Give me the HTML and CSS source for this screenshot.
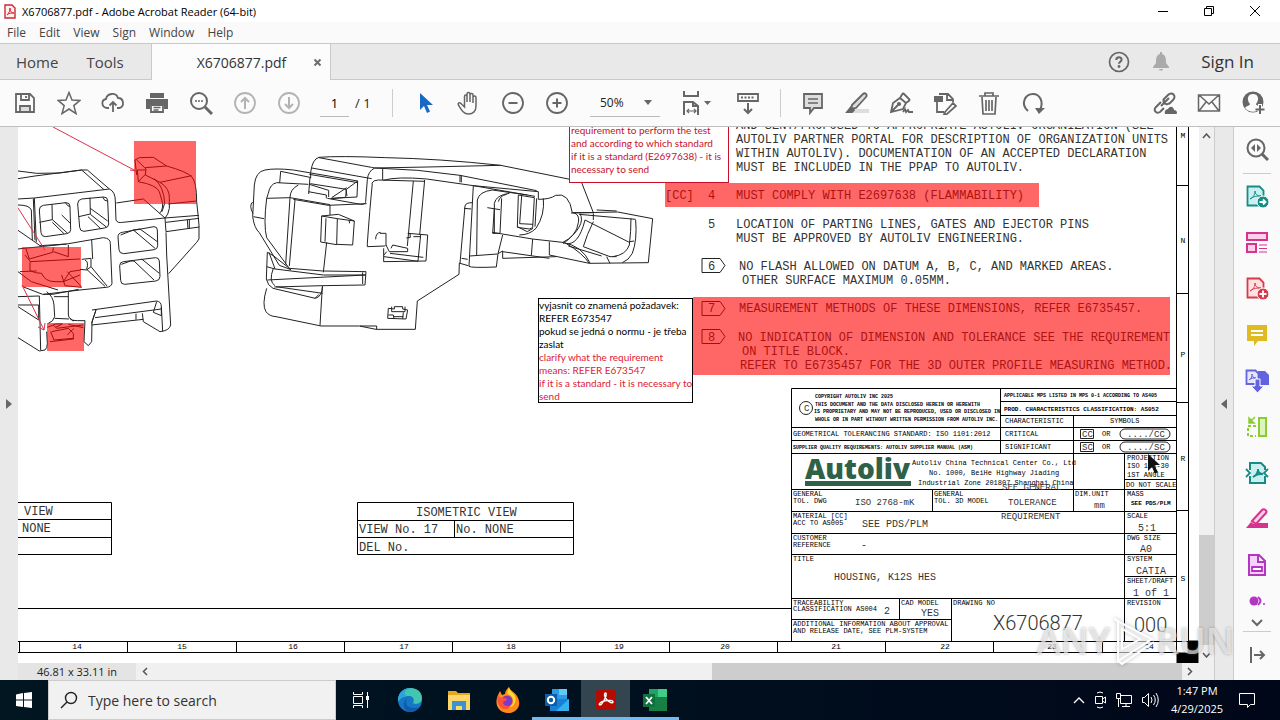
FILE: index.html
```html
<!DOCTYPE html>
<html lang="en">
<head>
<meta charset="utf-8">
<title>X6706877.pdf - Adobe Acrobat Reader (64-bit)</title>
<link rel="stylesheet" href="styles.css">
</head>
<body>
<header class="titlebar">
  <svg class="app-icon" width="12" height="15" viewBox="0 0 12 15"><path d="M1 1h7l3 3v10H1z" fill="#fff0f0" stroke="#c92a35" stroke-width="1.4"/><path d="M3 11c2-2 3-4 3-7 0 3 1 5 4 5-3 0-5 0-7 2z" fill="none" stroke="#d12631"/></svg>
  <span class="window-title">X6706877.pdf - Adobe Acrobat Reader (64-bit)</span>
  <div class="window-buttons">
    <button aria-label="Minimize"><svg width="12" height="12"><path d="M1 6.500h10" stroke="#000"/></svg></button>
    <button aria-label="Restore"><svg width="12" height="12" fill="none" stroke="#000"><path d="M1.500 3.500h7v7h-7zM3.500 3.500v-2h7v7h-2"/></svg></button>
    <button aria-label="Close"><svg width="12" height="12"><path d="M1 1l10 10M11 1L1 11" stroke="#000"/></svg></button>
  </div>
</header>
<nav class="menubar"><button>File</button><button>Edit</button><button>View</button><button>Sign</button><button>Window</button><button>Help</button></nav>
<div class="tabbar">
  <button class="nav-tab">Home</button><button class="nav-tab">Tools</button>
  <div class="file-tab"><span>X6706877.pdf</span><button aria-label="Close tab"><svg width="9" height="9"><path d="M1.500 1.500l6 6M7.500 1.500l-6 6" stroke="#6e6e6e" stroke-width="2"/></svg></button></div>
  <div class="account">
    <button aria-label="Help"><svg width="22" height="22" viewBox="0 0 22 22" fill="none" stroke="#666" stroke-width="1.700"><circle cx="11" cy="11" r="9.500"/><path d="M8.300 9c0-3.500 5.300-3.500 5.300-.3 0 2-2.600 2-2.600 4" stroke-width="2"/><circle cx="11" cy="15.500" r=".6"/></svg></button>
    <button aria-label="Notifications"><svg width="20" height="22" viewBox="0 0 20 22" fill="#aaa"><path d="M9 1h2v2c4 1 4 5 4 9l3 4v1H2v-1l3-4c0-4 0-8 4-9zM8 18h4c0 2-4 2-4 0z"/></svg></button>
    <button class="signin">Sign In</button>
  </div>
</div>
<div class="toolbar">
  <button aria-label="Save"><svg class="ic" viewBox="0 0 24 24"><path d="M3 3h14l4 4v14H3zM8 3v6h8V3M13 5v2"/><path d="M7 21v-6h10v6z" fill="#ddd"/></svg></button>
  <button aria-label="Star"><svg class="ic" viewBox="0 0 24 24"><path d="M12 1.500l3 7.500 8 .4-6.200 5.200 2.200 8L12 18l-7 4.600 2.200-8L1 9.400 9 9z" stroke-width="1.500"/></svg></button>
  <button aria-label="Upload"><svg class="ic" viewBox="0 0 24 24"><path d="M8 17H6c-6-1-6-8-1-9C6 2 15 1 17 7c6 0 7 9 1 10h-2M12 21V11M8.500 14.500L12 11l3.500 3.500"/></svg></button>
  <button aria-label="Print"><svg class="ic" viewBox="0 0 24 24"><path d="M5 2h14v5H5zM1 8h22v10h-4v-4H5v4H1z" fill="#666" stroke="none"/><path d="M6 14h12v7H6z" fill="#fbfbfb"/><path d="M8.500 16.500h7M8.500 19h5" stroke-width="1.300"/></svg></button>
  <button aria-label="Search"><svg class="ic" viewBox="0 0 24 24"><circle cx="10" cy="10" r="8" stroke-width="2"/><path d="M16 16l7 7" stroke-width="3"/><path d="M6 10h2M9 10h2M12 10h2" stroke-width="1.600"/></svg></button>
  <button aria-label="Previous page"><svg class="ic dim" viewBox="0 0 24 24"><circle cx="12" cy="12" r="10"/><path d="M12 18V7M8 11l4-4 4 4" stroke-width="2"/></svg></button>
  <button aria-label="Next page"><svg class="ic dim" viewBox="0 0 24 24"><circle cx="12" cy="12" r="10"/><path d="M12 6v11M8 13l4 4 4-4" stroke-width="2"/></svg></button>
  <input class="page-box" aria-label="Page" value="1"><span class="page-total">/ 1</span>
  <span class="divider"></span>
  <button aria-label="Select"><svg class="ic" viewBox="0 0 24 24"><path d="M7 2v17l4-4 3 7 3-1.500L14 14h6z" fill="#1769c5" stroke="none"/></svg></button>
  <button aria-label="Hand"><svg class="ic" viewBox="0 0 24 24"><path d="M7.500 14V5.500c0-2 2.500-2 2.500 0V11 3c0-2 3-2 3 0v8-7c0-2 3-2 3 0v8-5.500c0-2 3-2 3 0V15c0 5-3 8-7.500 8-5 0-7-4-10-9-1-2 1-3 2.500-1.500L7.500 16z" stroke-width="1.500"/></svg></button>
  <button aria-label="Zoom out"><svg class="ic" viewBox="0 0 24 24"><circle cx="12" cy="12" r="10"/><path d="M7.500 12h9" stroke-width="2"/></svg></button>
  <button aria-label="Zoom in"><svg class="ic" viewBox="0 0 24 24"><circle cx="12" cy="12" r="10"/><path d="M7.500 12h9M12 7.500v9" stroke-width="2"/></svg></button>
  <button class="zoom-box">50%<svg width="8" height="5"><path d="M0 0h8L4 5z" fill="#666"/></svg></button>
  <button class="fit" aria-label="Fit width"><svg width="32" height="26" viewBox="0 0 32 26" fill="none" stroke="#666" stroke-width="2"><path d="M4 1v5h14V1M4 25V12h9l5 4v9M13 12v4h5"/><path d="M7 21h9M9 19l-2 2 2 2M14 19l2 2-2 2" stroke-width="1.200"/><path d="M24 11h7l-3.500 4z" fill="#666" stroke="none"/></svg></button>
  <button aria-label="Keyboard"><svg class="ic" viewBox="0 0 24 24"><path d="M2 3h20v7H2z"/><path d="M5 6.500h14" stroke-dasharray="2 1.500"/><path d="M12 12v10M8 18l4 4 4-4" stroke-width="2"/></svg></button>
  <span class="divider"></span>
  <button aria-label="Comment"><svg class="ic" viewBox="0 0 24 24"><path d="M3 3h18v14h-8l-4 5v-5H3z" fill="#ddd"/><path d="M7 8h10M7 12h10" stroke-width="1.300"/></svg></button>
  <button aria-label="Highlight"><svg class="ic" viewBox="0 0 24 24"><path d="M12 18h12v4H5z" fill="#ddd" stroke="none"/><path d="M7 14L18 3c2-2 5 1 3 3L11 17l-5 1z" fill="#ddd"/><path d="M2 21l4-5 3 3-2 2z" fill="#666"/></svg></button>
  <button aria-label="Fill and sign"><svg class="ic" viewBox="0 0 24 24"><path d="M2 21l2-9 7-5 6 5-3 6zM2 21l7-7M11 7l3-5M17 12l4-3M14 2l7 7"/><circle cx="10" cy="13" r="1.200" fill="#666"/><path d="M14 21l2-3 1 3 2-2 1 2h4"/></svg></button>
  <button aria-label="Organize"><svg class="ic" viewBox="0 0 24 24"><path d="M4 11v10h7M6 3h9l5 5v3M14 3v6h6M12 21l8-9 3 3-9 8-3 .5z"/><path d="M1 5h9v6H1z" fill="#666" stroke="none"/></svg></button>
  <button aria-label="Delete"><svg class="ic" viewBox="0 0 24 24"><path d="M2 5h20M8 5V2h8v3M5 6l1 17h12l1-17M9 9v11M12 9v11M15 9v11" stroke-width="1.700"/></svg></button>
  <button aria-label="Rotate"><svg class="ic" viewBox="0 0 24 24"><path d="M7 20C-1 13 4 3 12 3c7 0 11 8 7 16" stroke-width="2"/><path d="M14 17h10l-6 6z" fill="#666" stroke="none"/></svg></button>
  <span class="spacer"></span>
  <button aria-label="Share link"><svg class="ic" viewBox="0 0 24 24"><path d="M8 15l8-8M10 9l5-5c4-4 9 1 5 5l-4 4M8 11l-5 5c-4 4 2 8 5 4l3-3M11 8c-2 4 3 7 5 4" stroke-width="2"/><path d="M12 23c-1-4 2-5 3-5 2-4 6-2 6 1 3 0 4 4 2 4z" fill="#666" stroke="none"/></svg></button>
  <button aria-label="Mail"><svg class="ic" viewBox="0 0 24 24"><path d="M1.500 4h21v16h-21zM2 4l10 9L22 4M2 20l7-9M22 20l-7-9" stroke-width="1.500"/></svg></button>
  <button aria-label="Account"><svg class="ic" viewBox="0 0 24 24"><circle cx="12" cy="11" r="10.500" fill="#666" stroke="none"/><path d="M4 17c2-3 5-2 5-4-4-5-2-10 3-10s7 5 3 10c0 2 3 1 5 4-4 5-12 5-16 0z" fill="#fbfbfb" stroke="none"/><path d="M19 13v10M14 18h10" stroke="#fbfbfb" stroke-width="4"/><path d="M19 14v9M14.500 18.500h9" stroke-width="2"/></svg></button>
</div>
<main class="workspace">
  <button class="rail" aria-label="Open navigation pane"><svg width="8" height="12"><path d="M1 1v10l6-5z" fill="#666"/></svg></button>
  <section class="viewer">
    <div class="page-row">
      <div class="page">
<svg class="drawing" width="1181" height="536" viewBox="18 127 1181 536">
  <g class="part" transform="translate(0 125) scale(.33333)">
    <path d="M54 138l56 7q70 3 135-10h17l66 57q18 8 18 36l2 57q4 10 20 7l127-13 102-8M54 161l51-8 140-18 67 59 16-2M54 222l49-3 209-25M100 221l5 125M103 219l6 133M54 240q34 0 40 15l3 90M54 316l52 36 14 10 80-5 110-19q22 2 21 18l5 119q-2 11-18 12l-78 8-110 13M54 372l146-15"/>
    <path d="M130 241l68-8q12 0 12 11l2 70q0 10-12 12l-64 9q-12 0-13-12l-5-68q0-12 12-14zM245 222l66-6q12 0 12 11l3 70q0 10-12 12l-62 10q-12 0-13-12l-6-70q0-13 12-15z"/>
    <path d="M118 292l39-8-1-46M157 284l45 40M157 292l35 34M185 270l26 25M236 275l35-8-1-49M271 268l48 38M264 275l38 36M271 250l52 38M195 232q10 15 15 12M308 216q5 14 15 12"/>
    <path d="M367 322l95-17q10 0 10 10l1 47q0 10-10 12l-92 12q-13 0-14-12l-3-38q0-12 13-14zM370 410l97-12q10 0 11 10l2 46q0 12-12 14l-94 10q-12 0-12-12l-3-43q0-12 11-13zM362 330l38-15 65 55M400 315l20-3 52 38M364 418l28-10h10l60 57M425 402l53 43"/>
    <path d="M349 234l81-12 65 57M410 150l-5-45 13-7 42-1 40 26q60 17 75 32 15 15 15 75l4 38 3 32v42l-7 10-84 94M436 128l64-5M410 105l28 27-2 18 44 22 95-20M436 148l-21 22-3-35h24M415 170q55 10 63 30l10 35q0 25-10 30M480 172q30 18 28 48v30q-3 20-13 29M462 160q30 25 32 75l-8 25M505 237l85-9M495 279l3 41 100-14M498 292l99-12M562 285l2 27M568 285v27M498 322l2 68 12 210q-4 17-32 20l-50-30-3-25M484 545l4 74"/>
    <path d="M276 555l194-27q14 2 14 17v27M288 555l-13 40M285 578l199-26M275 600l155-17M408 566v18M470 530l-10 32 24 10M210 580q5 8 22 7h23l-3 63 13 12 10-12 1-60 12-35"/>
    <path d="M140 500q20 15 22 40l2 35q-4 15-19 20M162 515h43M205 500v70q2 13 17 18M164 580l43 2M54 515l64-2 4 162M54 540h62v45M54 545l62 40M54 638l64 40 17-3q7-5 7-20l-2-35M54 440l40 30 80 25M60 440l50-2M68 485l60 23h30l78-15M90 410l150-8M90 412v25q15 8 35 8 10 25 40 25h25l20-30 32-5M78 372l10 30 70-20 2-15M75 390l18 22M160 380l45 15M205 360v35M245 403l28-3v25l-13 10-20-2M275 345l3 57M255 405q12 5 5 28M273 425l48 58M260 433l55 51M202 440l42 45M185 450l10 32 50 5M190 470l50-20"/>
    <path d="M142 607l25-10h20l-20 10M155 620l50-10 15 15v18M152 620l10 25 58-5M150 650l70-8M205 598l45 10M222 610l-20 20M160 600l10 10 80-10"/>
  </g>
  <g class="part" transform="translate(240 145) scale(.33333)">
    <path d="M212 82q5-40 25-45 60-5 200 1 160 3 345 23L990 103M212 82v18M215 69l180 32M237 38l157 29 10 2M404 69l160-3 218-5M404 69q-20 10-22 35l-5 65q0 10-15 9l-100-18M428 69v36M404 69q130 3 256 22l230 46M660 91v21M664 91v21M430 106q40-12 130-4l140 20 185 32M395 115q5-10 20-10l140 4"/>
    <path d="M75 75q-28 5-32 45L38 215q5 35 20 48l60 98 35 13M75 75q30-6 85 0l193 33-2 48-76 4M122 79l-3 35M122 79l88 18-4 50M353 108l-34 25-2 24-45 4M319 133l-108-17M275 158l45-30M80 160l5-15q5-28 25-32l95 5M80 160q-10 80 0 118l70 95M80 160l70-2 120 21M150 158q0-25 25-38M160 163l105 18 115-5M150 158l-13 200M165 165l-17 198M40 215l32 6M38 171q-12 10 1 35"/>
    <path d="M205 140l54 10v10M270 180v30M245 213l47 8-2 78-48-8zM292 221l51 7-5 72-48-2M258 220l-3 70M260 292l-10 90M245 213l50-5 48 20M327 225l2 10M318 133l3 20M208 88l146 25M208 118l58 18v20M247 425l-7 117"/>
    <path d="M82 322l18 10 48 38 100 8 130 2-3 40-127 2-145 4M80 365l25 7 145 18h128M368 382v35M82 405l295-15M82 322l-3 80q4 20 20 28l127 30q20-4 22-38M100 370q-15 40 5 52M108 425l140 20M225 460l12-12M80 430q-15 50-2 70 10 14 30 15l135 28 115 0 50 10h118l6-85 125-80 1-35M105 372l-18-50M360 543h50v10"/>
    <path d="M397 115q-8 80-15 180v10l53-2M520 108l-18 195M554 105l-15 165M420 265h18v38M407 283q0-20 15-21M438 300l10 20h55v-10l-45-10-5 10M503 265l60 5-5 78-127 2v-40M510 265l1 12-12 2M542 270l-8 78M520 275h23M432 335l103 14M440 320l-8 10M450 325l100 12"/>
    <path d="M445 490l18 2v-7h25v7l15 3-5 27-55-2zM445 510h15l2 12M490 502l-2 20M455 485v15h40v-15M460 515h30"/>
    <path d="M700 122l-13 242q5 5 82 2l5-40 14-8v22M700 122l195 18v23q35 0 52-12 40-10 50 52l63 0-35-90M660 355l15-172q2-10 22-10M660 355l25 7M672 190l22 2M665 340l18 3M690 333l82-6M712 165q5-25 45-30l105 15M712 165l-2 165M742 188l38 6M763 265v-90q5-25 45-30M785 160l-5 105h-22l5-75M775 170q5-18 25-22M757 262l120 20 90 10q60 10 83 62M788 340l160-5M788 270l-14 56M788 320l140 20M878 282l-4 50M928 290v40l120 25 177-2 13-132-105-20-140 3"/>
    <path d="M835 150l48 8-5 90-10 4-36-5zM845 153l-6 83 40 2M832 245l30 15 17-10M910 160q5 50-22 90-20 20-50 20M890 160l-5 85M1000 203q20 5 15 30-5 40-48 60M1020 206q20 35-50 90M1035 225l135 68M1035 225q-20 80-60 70M1060 230q-20 40-30 75M1017 208l170 15M1173 220q0 40-5 80-10 30-50 35M1187 225q5 60-10 100-10 20-30 28M1100 335l10 20M1170 290l12-2M1030 305l80 30h20M985 303l100 30M1048 355q-20-30-70-60M1070 195l60 3M1060 205v20"/>
  </g>
  <g class="part thick">
    <path d="M18 502.500h93.500v52M18 519.500h93.500M18 537.500h93.500M18 554.500h94M357.500 502.500h216v52h-216zM357.500 520.500h216M357.500 537.500h216M454.500 520.500v17M18 608.500h773.500M18 641.500h1170M18 652.500h1159M1188.500 127v515M1176.500 127v526"/>
    <path d="M19.500 641v11M127.500 641v11M236.500 641v11M344.500 641v11M452.500 641v11M560.500 641v11M669.500 641v11M777.500 641v11M885.500 641v11M993.500 641v11M1102.500 641v11M1177 185.500h11M1177 293.500h11M1177 402.500h11M1177 510.500h11"/>
    <path d="M791.500 641V388.500h385M1000.500 388v65M1000.500 401.500h176M1000.500 415.500h176M791.500 427.500h385M791.500 440.500h385M791.500 453.500h385M1073.500 415v96M1124.500 453v188M1124.500 479.500h52M791.500 489.500h385M932.500 489v22M791.500 511.500h385M791.500 533.500h385M791.500 554.500h385M1124.500 576.500h52M791.500 598.500h385M791.500 619.500h160M899.500 598v21M951.500 598v43"/>
    <path d="M1188 641h10v22h-21v-10h11z" fill="#000"/>
  </g>
  <g class="part"><path d="M702 258.500h18l5 7-5 7h-18zM702 301.500h18l5 7-5 7h-18zM702 329.500h18l5 7-5 7h-18z"/><circle cx="806" cy="408" r="6.500"/><rect x="1120" y="429" width="50" height="10" rx="5"/><rect x="1120" y="442" width="50" height="10" rx="5"/><path d="M1080.500 429.500h13v9h-13zM1080.500 442.500h13v9h-13z"/></g>
  <g class="s12">
    <text x="736" y="129">AND SENT/PROPOSED TO APPROPRIATE AUTOLIV ORGANIZATION (SEE</text>
    <text x="736" y="143">AUTOLIV PARTNER PORTAL FOR DESCRIPTION OF ORGANIZATION UNITS</text>
    <text x="736" y="157">WITHIN AUTOLIV). DOCUMENTATION OF AN ACCEPTED DECLARATION</text>
    <text x="736" y="171">MUST BE INCLUDED IN THE PPAP TO AUTOLIV.</text>
    <text x="665" y="199">[CC]</text><text x="708" y="199">4</text><text x="736" y="199">MUST COMPLY WITH E2697638 (FLAMMABILITY)</text>
    <text x="708" y="228">5</text><text x="736" y="228">LOCATION OF PARTING LINES, GATES AND EJECTOR PINS</text>
    <text x="736" y="242">MUST BE APPROVED BY AUTOLIV ENGINEERING.</text>
    <text x="708" y="270">6</text><text x="739" y="270">NO FLASH ALLOWED ON DATUM A, B, C, AND MARKED AREAS.</text>
    <text x="742" y="284">OTHER SURFACE MAXIMUM 0.05MM.</text>
    <text x="708" y="312">7</text><text x="739" y="312">MEASUREMENT METHODS OF THESE DIMENSIONS, REFER E6735457.</text>
    <text x="708" y="341">8</text><text x="738" y="341">NO INDICATION OF DIMENSION AND TOLERANCE SEE THE REQUIREMENT</text>
    <text x="742" y="355">ON TITLE BLOCK.</text>
    <text x="740" y="369">REFER TO E6735457 FOR THE 3D OUTER PROFILE MEASURING METHOD.</text>
    <text x="24" y="515">VIEW</text><text x="22" y="532">NONE</text>
    <text x="416" y="516">ISOMETRIC VIEW</text><text x="359" y="533">VIEW No. 17</text><text x="456" y="533">No. NONE</text><text x="359" y="551">DEL No.</text>
  </g>
  <g class="s5"><text x="815" y="398">COPYRIGHT AUTOLIV INC 2025</text><text x="815" y="406">THIS DOCUMENT AND THE DATA DISCLOSED HEREIN OR HEREWITH</text><text x="814" y="413">IS PROPRIETARY AND MAY NOT BE REPRODUCED, USED OR DISCLOSED IN</text><text x="815" y="421">WHOLE OR IN PART WITHOUT WRITTEN PERMISSION FROM AUTOLIV INC.</text><text x="793" y="449">SUPPLIER QUALITY REQUIREMENTS: AUTOLIV SUPPLIER MANUAL (ASM)</text><text x="1004" y="397">APPLICABLE MPS LISTED IN MPS 0-1 ACCORDING TO AS405</text></g>
  <g class="s6"><text x="1004" y="411">PROD. CHARACTERISTICS CLASSIFICATION: AS052</text><text x="1131" y="505">SEE PDS/PLM</text></g>
  <g class="s7">
    <text x="793" y="436">GEOMETRICAL TOLERANCING STANDARD: ISO 1101:2012</text>
    <text x="1005" y="423">CHARACTERISTIC</text><text x="1110" y="423">SYMBOLS</text><text x="1005" y="436">CRITICAL</text><text x="1005" y="449">SIGNIFICANT</text><text x="1102" y="436">OR</text><text x="1102" y="449">OR</text>
    <text x="912" y="465">Autoliv China Technical Center Co., Ltd</text><text x="929" y="475">No. 1000, BeiHe Highway Jiading</text><text x="918" y="485">Industrial Zone 201807 Shanghai China</text>
    <text x="1127" y="460">PROJECTION</text><text x="1127" y="468">ISO 128-30</text><text x="1127" y="477">1ST ANGLE</text><text x="1126" y="487">DO NOT SCALE</text>
    <text x="793" y="496">GENERAL</text><text x="793" y="503">TOL. DWG</text><text x="934" y="496">GENERAL</text><text x="934" y="503">TOL. 3D MODEL</text><text x="1075" y="496">DIM.UNIT</text><text x="1127" y="496">MASS</text>
    <text x="793" y="518">MATERIAL [CC]</text><text x="793" y="525">ACC TO AS005</text><text x="1127" y="518">SCALE</text><text x="793" y="540">CUSTOMER</text><text x="793" y="547">REFERENCE</text><text x="1127" y="540">DWG SIZE</text><text x="793" y="561">TITLE</text><text x="1127" y="561">SYSTEM</text><text x="1127" y="583">SHEET/DRAFT</text>
    <text x="793" y="605">TRACEABILITY</text><text x="793" y="611">CLASSIFICATION AS004</text><text x="901" y="605">CAD MODEL</text><text x="953" y="605">DRAWING NO</text><text x="1127" y="605">REVISION</text><text x="793" y="626">ADDITIONAL INFORMATION ABOUT APPROVAL</text><text x="793" y="633">AND RELEASE DATE, SEE PLM-SYSTEM</text>
  </g>
  <g class="s9"><text x="855" y="505">ISO 2768-mK</text><text x="1002" y="490">SEE GENERAL</text><text x="1008" y="505">TOLERANCE</text><text x="1001" y="519">REQUIREMENT</text><text x="1094" y="508">mm</text><text x="1082" y="437">CC</text><text x="1082" y="450">SC</text><text x="1127" y="437">..../CC</text><text x="1127" y="450">..../SC</text><text x="804" y="411">C</text></g>
  <g class="s10"><text x="862" y="527">SEE PDS/PLM</text><text x="861" y="548">-</text><text x="834" y="580">HOUSING, K12S HES</text><text x="884" y="614">2</text><text x="921" y="616">YES</text><text x="1138" y="531">5:1</text><text x="1140" y="552">A0</text><text x="1136" y="574">CATIA</text><text x="1133" y="596">1 of 1</text></g>
  <g class="s20"><text x="993" y="630">X6706877</text><text x="1134" y="632">000</text></g>
  <g class="s8"><text x="77" y="649">14</text><text x="182" y="649">15</text><text x="293" y="649">16</text><text x="404" y="649">17</text><text x="511" y="649">18</text><text x="619" y="649">19</text><text x="725" y="649">20</text><text x="836" y="649">21</text><text x="945" y="649">22</text><text x="1052" y="649">23</text><text x="1149" y="649">24</text><text x="1183" y="138">M</text><text x="1183" y="243">N</text><text x="1183" y="357">P</text><text x="1183" y="461">R</text><text x="1183" y="581">S</text></g>
  <text class="logo" x="805" y="479">Autoliv</text><path d="M805 481h106v5H805z" fill="#2f6148"/>
  <g class="mark"><path d="M134 141h62v63h-62zM22 247h59v40H22zM47 323h37v28H47zM665 183h374v24H665zM693 297h477v78H693z"/></g>
  <g class="arrow"><path d="M53 127l83 44M136 171l-6-1M18 208l27 42M22 285l22 45M38 327l6 3 1-7"/></g>
  <path d="M1148 454l12 11h-6l4 7-3 2-3-7-4 4z" fill="#111"/>
</svg>
        <div class="note note-red"><p>requirement to perform the test<br>and according to which standard<br>if it is a standard (E2697638) - it is<br>necessary to send</p></div>
        <div class="note note-black"><p>vyjasnit co znamená požadavek:<br>REFER E673547<br>pokud se jedná o normu - je třeba<br>zaslat</p><p class="red">clarify what the requirement<br>means: REFER E673547<br>if it is a standard - it is necessary to<br>send</p></div>
      </div>
      <div class="vscroll"><svg width="9" height="6"><path d="M1 5l3.500-4L8 5" fill="none" stroke="#555" stroke-width="1.500"/></svg><span class="vthumb"></span><svg width="9" height="6"><path d="M1 1l3.500 4L8 1" fill="none" stroke="#555" stroke-width="1.500"/></svg></div>
    </div>
    <div class="bottom-row"><span class="page-size">46.81 x 33.11 in</span><svg width="6" height="9"><path d="M5 1L1.500 4.500 5 8" fill="none" stroke="#555" stroke-width="1.500"/></svg><span class="hthumb"></span><svg width="6" height="9"><path d="M1 1l3.500 3.500L1 8" fill="none" stroke="#555" stroke-width="1.500"/></svg></div>
  </section>
  <button class="rail rail-right" aria-label="Toggle tools pane"><svg width="8" height="12"><path d="M7 1v10L1 6z" fill="#666"/></svg></button>
  <aside class="tools">
    <button aria-label="Find"><svg class="ic" viewBox="0 0 24 24"><circle cx="11" cy="10" r="8.500" stroke-width="2"/><path d="M17 16l6 6" stroke-width="3"/><path d="M10 6v8l-4-4zM12 6v8l4-4z" fill="#666" stroke="none"/></svg></button>
    <span class="rule"></span>
    <button aria-label="Export PDF"><svg class="ic teal" viewBox="0 0 24 24"><path d="M2.500 1.500h12l4 4v15h-16z" fill="#c9eff0"/><path d="M5 14c4-2 5-5 5-8 0 3 2 5 6 5-4 0-7 0-11 3z" stroke-width="1"/><circle cx="18" cy="17" r="6" fill="#168c84" stroke="#fff" stroke-width="1"/><path d="M14.500 17h6M18 14.500l2.500 2.500-2.500 2.500" stroke="#fff"/></svg></button>
    <button aria-label="Organize pages"><svg class="ic pink" viewBox="0 0 24 24"><path d="M2 2h20v7H2zM2 13h9v8H2z" fill="#fbd0e8" stroke-width="2"/><path d="M14 14h8M14 17.500h8M14 21h8" stroke-width="1"/></svg></button>
    <button aria-label="Create PDF"><svg class="ic crimson" viewBox="0 0 24 24"><path d="M2.500 1.500h12l4 4v15h-16z" fill="#ffe1e1"/><path d="M5 14c4-2 5-5 5-8 0 3 2 5 6 5-4 0-7 0-11 3z" stroke-width="1"/><circle cx="18" cy="17" r="6" fill="#d63b4b" stroke="#fff" stroke-width="1"/><path d="M14.500 17h7M18 13.500v7" stroke="#fff"/></svg></button>
    <button aria-label="Comment tools"><svg class="ic" viewBox="0 0 24 24"><path d="M2 2h20v16h-9l-4 5v-5H2z" fill="#dfba20" stroke="none"/><path d="M6 8h12M6 12h12" stroke="#fff"/></svg></button>
    <button aria-label="Combine files"><svg class="ic" viewBox="0 0 24 24"><path d="M13 2h7l4 4v10H13z" fill="#6463df" stroke="none"/><path d="M1.500 1.500h9l3 3V15h-12z" fill="#e6e6ff" stroke="#6463df"/><path d="M4 11c3-2 3-4 3-6 0 2 1 4 4 4-3 0-5 0-7 2z" stroke="#6463df" stroke-width="1"/><path d="M10 10h5v7h4l-6.500 7L6 17h4z" fill="#6463df" stroke="#fff" stroke-width="1"/></svg></button>
    <button aria-label="Crop"><svg class="ic lime" viewBox="0 0 24 24"><path d="M14 3h7v18h-7z" fill="#ddf5bd" stroke-width="2"/><path d="M11 11H3v10h8" stroke-dasharray="3 2" stroke-width="2"/><path d="M4 3v5h5zM5 7l5-5" fill="#8bcc30" stroke-width="1.500"/></svg></button>
    <button aria-label="Compress"><svg class="ic teal" viewBox="0 0 24 24"><path d="M5 9V2h11l4 4v3M5 15v7h15v-7" fill="#c9eff0" stroke-width="2"/><path d="M6 8h13v8H6z" fill="#c9eff0" stroke="none"/><path d="M1 8l4 4-4 4M23 8l-4 4 4 4M8 16c4-2 5-5 5-8 0 3 2 5 5 5-4 0-6 0-10 3z"/></svg></button>
    <button aria-label="Redact"><svg class="ic" viewBox="0 0 24 24"><path d="M10 16h13v5H6z" fill="#d7338d" stroke="none"/><path d="M7 14L17 3c2-2 6 1 4 3L11 17z" fill="#fbd0e8" stroke="#d7338d" stroke-width="2"/><path d="M1 21l5-6 4 3-3 3z" fill="#d7338d" stroke="none"/></svg></button>
    <button aria-label="Forms"><svg class="ic violet" viewBox="0 0 24 24"><path d="M4 2h10l6 6v14H4zM13 2v7h7" fill="#f7d2fb" stroke-width="2"/><path d="M7 14h10v4H7z" fill="#fff"/></svg></button>
    <button class="cut" aria-label="More tools"><svg width="20" height="10"><circle cx="7" cy="5" r="4.500" fill="#b336c3"/><path d="M11 1q5 4 0 8" stroke="#b336c3" stroke-width="2" fill="none"/><circle cx="17" cy="8" r="1" fill="#b336c3"/></svg></button>
    <button class="chev" aria-label="Scroll down"><svg width="14" height="8"><path d="M2 1l5 5 5-5" fill="none" stroke="#666" stroke-width="2"/></svg></button>
    <span class="rule"></span>
    <button class="last" aria-label="Collapse"><svg width="18" height="18"><path d="M3 1v16" stroke="#666" stroke-width="2"/><path d="M6 9h10M12 5l4 4-4 4" fill="none" stroke="#666" stroke-width="2"/></svg></button>
  </aside>
  <div class="watermark" aria-hidden="true"><span>ANY</span><svg width="46" height="50" viewBox="0 0 46 50"><path d="M4 3l38 20L8 45V4M12 13v20l18-10zM8 45l4 3 32-22" fill="#fff" fill-opacity=".5" stroke="#fff" stroke-width="2"/></svg><span>RUN</span></div>
</main>
<footer class="taskbar">
  <button class="start" aria-label="Start"><svg width="18" height="18"><path d="M1 3.500L8 2v6.500H1zM9 2l8-1v7.500H9zM1 9.500h7V16l-7-1zM9 9.500h8V17l-8-1z" fill="#fff"/></svg></button>
  <label class="search"><svg width="18" height="18"><circle cx="11" cy="7" r="5.500" fill="none" stroke="#222" stroke-width="1.400"/><path d="M7 11l-6 6" stroke="#222" stroke-width="1.400"/></svg><input type="text" placeholder="Type here to search" aria-label="Search"></label>
  <button class="app" aria-label="Task view"><svg width="18" height="18" fill="none" stroke="#fff"><path d="M1.500 1v2.500h9V1M1.500 5.500h9v7h-9zM1.500 17v-2.500h9V17M15.500 1v16"/><path d="M14 5h3v4h-3z" fill="#fff" stroke="none"/></svg></button>
  <button class="app" aria-label="Edge"><svg width="26" height="26" viewBox="0 0 26 26"><circle cx="13" cy="13" r="12" fill="#1677c6"/><path d="M1 13C2-3 25-2 25 11c0 6-7 7-9 5 2-3 0-7-4-7-5 0-9 2-11 6z" fill="#43c6b0"/><path d="M1 13C2 4 8 1 14 1c-7 2-8 6-4 8-4 1-7 2-9 6z" fill="#2ba3e0"/><path d="M10 11c-4 8 4 12 12 9-3 4-7 5-10 5-5-1-8-9-2-14z" fill="#115ca8"/></svg></button>
  <button class="app" aria-label="File Explorer"><svg width="24" height="22" viewBox="0 0 24 22"><path d="M1 2h8l2 2h12v17H1z" fill="#e5a823"/><path d="M1 6h22v15H1z" fill="#ffd768"/><path d="M5 12h14v9h-4v-4H9v4H5z" fill="#3793d4"/></svg></button>
  <button class="app" aria-label="Firefox"><svg width="26" height="26" viewBox="0 0 26 26"><path d="M14 0c1 4 6 5 8 9 7 12-4 18-10 17C3 25-1 17 3 8l2-4 2 4 3-1c0-3 2-5 4-7z" fill="#ff8a19"/><path d="M14 0c0 5 9 7 6 15-1 5-7 7-10 5 10 2 11-12 2-13z" fill="#ffda31"/><circle cx="12" cy="14" r="5.500" fill="#7b3bc9"/><path d="M3 9c3 3 6 1 9 3-1 3-3 1-4 4 1 3 5 4 8 2-4 9-16 2-13-9z" fill="#ff503b"/></svg></button>
  <button class="app open" aria-label="Outlook"><svg width="26" height="26" viewBox="0 0 26 26"><path d="M8 2h15v12H8z" fill="#2a9be8"/><path d="M15 2h8v6h-8z" fill="#62c8f6"/><path d="M6 12h19v12H6z" fill="#1582d8"/><path d="M25 12L12 24h13z" fill="#35b1ee"/><path d="M1 7h12v12H1z" fill="#0b5cab"/><circle cx="7" cy="13" r="3.200" fill="none" stroke="#fff" stroke-width="2"/></svg></button>
  <button class="app open active" aria-label="Acrobat"><svg width="22" height="22" viewBox="0 0 22 22"><rect x="1" y="1" width="20" height="20" rx="3" fill="#b60b00"/><path d="M5 16c-2 0 0-3 4-4 5-1 9-1 9 1s-4 0-6-2c-3-3-3-7-1.500-7S11 9 8 13c-1 2-2 3-3 3z" fill="none" stroke="#fff" stroke-width="1.400"/></svg></button>
  <button class="app open" aria-label="Excel"><svg width="26" height="24" viewBox="0 0 26 24"><path d="M7 1h18v22H7z" fill="#168047"/><path d="M7 1h9v8H7z" fill="#21a366"/><path d="M16 1h9v8h-9z" fill="#42cc87"/><path d="M1 6h12v13H1z" fill="#10713c"/><path d="M4 9l6 7M10 9l-6 7" stroke="#fff" stroke-width="1.800"/></svg></button>
  <span class="spacer"></span>
  <div class="tray">
    <svg width="12" height="8"><path d="M1 7l5-5 5 5" fill="none" stroke="#fff" stroke-width="1.300"/></svg>
    <svg width="14" height="18" fill="none" stroke="#fff"><path d="M4 2q3-2 6 0M4 16q3 2 6 0M2.500 5.500h7v7h-7zM9.500 8l3-2v6l-3-2"/></svg>
    <svg width="18" height="16" fill="none" stroke="#fff"><path d="M5.500 3.500h11v8h-11zM11 12v3M7 14.500h8M1.500 1.500h4v5h-4zM3.500 7v8"/></svg>
    <svg width="18" height="16" fill="none" stroke="#fff"><path d="M1.500 5.500h2l4-4v13l-4-4h-2zM10 5q2 3 0 6M12.500 3q3.500 5 0 10M15 1q4.500 7 0 14"/></svg>
    <div class="clock">1:47 PM<br>4/29/2025</div>
    <svg width="18" height="18" fill="none" stroke="#fff"><path d="M1.500 2.500h15v11h-4l-3 3v-3h-8z"/></svg>
  </div>
</footer>
</body>
</html>
```
FILE: styles.css
```css
* { box-sizing: border-box; }
body { margin: 0; height: 100vh; display: flex; flex-direction: column; overflow: hidden; background: #fff; color: #222; font: 12px "Open Sans", "Noto Sans", sans-serif; }
button { margin: 0; padding: 0; border: 0; background: none; font: inherit; color: inherit; }
svg { display: block; flex: none; }
p { margin: 0; }
.spacer { flex: 1; }
.titlebar { flex: none; height: 22px; display: flex; align-items: center; padding-left: 4px; gap: 6px; color: #000; font-size: 11px; }
.window-title { flex: 1; }
.window-buttons { display: flex; align-items: center; padding-right: 2px; }
.window-buttons button { width: 46px; display: flex; justify-content: center; }
.menubar { flex: none; height: 21px; display: flex; align-items: center; gap: 13px; padding-left: 7px; background: #fafafa; color: #444; }
.tabbar { flex: none; height: 37px; display: flex; align-items: stretch; background: #e9e9e9; border-top: 1px solid #c9c9c9; border-bottom: 1px solid #c9c9c9; color: #444; font-size: 15px; }
.nav-tab { margin-left: 16px; margin-right: 12px; }
.file-tab { width: 180px; margin-bottom: -1px; margin-left: 15px; display: flex; align-items: center; justify-content: space-between; padding: 0 8px 0 45px; background: #fcfcfc; border-left: 1px solid #c9c9c9; border-right: 1px solid #c9c9c9; color: #333; font-size: 14px; }
.account { margin-left: auto; display: flex; align-items: center; gap: 21px; padding-right: 26px; }
.signin { margin-left: 9px; color: #333; font-size: 17px; }
.toolbar { flex: none; height: 47px; display: flex; align-items: center; padding: 0 5px 0 3px; background: #fbfbfb; border-bottom: 1px solid #bfbfbf; }
.toolbar > button { width: 44px; display: flex; justify-content: center; }
.ic { width: 24px; height: 24px; fill: none; stroke: #666; stroke-width: 1.8px; }
.ic.dim { stroke: #b3b3b3; }
.ic.teal { stroke: #168c84; }
.ic.pink { stroke: #d7338d; }
.ic.crimson { stroke: #d63b4b; }
.ic.lime { stroke: #8bcc30; }
.ic.violet { stroke: #b336c3; }
.page-box { width: 29px; height: 28px; margin-left: 9px; padding: 0; border: 0; border-bottom: 1px solid #bbb; background: none; text-align: center; font: inherit; font-size: 13px; }
.page-total { width: 22px; margin-left: 6px; font-size: 13px; white-space: nowrap; }
.divider { width: 1px; height: 28px; background: #ccc; margin: 0 10px 0 15px; }
.toolbar .zoom-box { width: 70px; height: 28px; margin-left: 11px; padding: 0 8px 0 10px; align-items: center; justify-content: space-between; border-bottom: 1px solid #bbb; }
.toolbar .fit { width: 60px; margin-left: 6px; }
.fit + button + .divider { margin: 0 10px; }
.workspace { flex: 1; min-height: 0; display: flex; position: relative; }
.rail { flex: none; width: 18px; display: flex; align-items: center; justify-content: center; background: #e9e9e9; }
.rail-right { width: 20px; border-left: 1px solid #ccc; border-right: 1px solid #ccc; }
.viewer { flex: 1; min-width: 0; display: flex; flex-direction: column; }
.page-row { flex: 1; min-height: 0; display: flex; }
.page { flex: 1; min-width: 0; position: relative; overflow: hidden; background: #fff; }
.vscroll { flex: none; width: 15px; display: flex; flex-direction: column; align-items: center; background: #f0f0f0; padding: 6px 0 5px; }
.vthumb { width: 15px; height: 21%; margin-top: auto; margin-bottom: 7px; background: #cdcdcd; }
.bottom-row { flex: none; height: 17px; display: flex; align-items: center; background: #f0f0f0; padding-right: 21px; }
.page-size { align-self: stretch; width: 118px; margin-right: 6px; line-height: 17px; text-align: center; background: #e4e4e4; font-size: 11px; }
.hthumb { align-self: stretch; width: 40%; margin-left: auto; margin-right: 5px; background: #cdcdcd; }
.tools { flex: none; width: 46px; display: flex; flex-direction: column; align-items: center; background: #fafafa; }
.tools > button { flex: none; height: 46px; display: flex; align-items: center; justify-content: center; }
.rule { flex: none; width: 28px; height: 1px; background: #ccc; }
.tools .cut { height: 26px; }
.tools .chev { height: 17px; }
.note { position: absolute; background: #fff; border: 1px solid #000; padding: 0 1px; font: 10px/13px Lato, "Noto Sans", sans-serif; color: #000; white-space: nowrap; }
.note-red { left: 551px; top: -4px; width: 160px; height: 60px; border-color: #c9102a; color: #c9102a; }
.note-black { left: 520px; top: 171px; width: 155px; height: 105px; padding: 0; }
.red { color: #dc2034; }
.drawing { font-family: "Liberation Mono", monospace; fill: #333; }
.part { fill: none; stroke: #222; stroke-width: 1px; }
.part path { vector-effect: non-scaling-stroke; }
.thick { stroke: #000; }
.s5 { font-size: 5px; font-weight: bold; fill: #000; }
.s6 { font-size: 6px; font-weight: bold; fill: #000; }
.s7 { font-size: 7px; fill: #000; }
.s8 { font-size: 8px; text-anchor: middle; fill: #000; }
.s9 { font-size: 9px; }
.s10 { font-size: 10px; }
.s12 { font-size: 12px; }
.s20 { font-family: Roboto, sans-serif; font-size: 20px; font-weight: 300; }
.logo { font-family: "Open Sans", sans-serif; font-size: 28px; font-weight: 800; fill: #2f6148; }
.mark { fill: #f00; fill-opacity: .6; }
.arrow { fill: none; stroke: #e0304a; }
.watermark { position: absolute; right: 46px; bottom: 14px; display: flex; align-items: center; font: 600 36px/50px "Open Sans", sans-serif; color: rgba(255,255,255,.6); text-shadow: 0 0 3px rgba(90,90,90,.5); pointer-events: none; }
.watermark svg { filter: drop-shadow(0 0 2px rgba(90,90,90,.4)); }
.taskbar { flex: none; height: 40px; display: flex; background: linear-gradient(90deg, #001620, #00101f 50%, #000719); color: #fff; }
.start { width: 48px; display: flex; align-items: center; justify-content: center; }
.search { width: 288px; display: flex; align-items: center; gap: 10px; padding: 0 11px; background: #f1f1f1; border: 1px solid #ccc; }
.search input { flex: 1; min-width: 0; border: 0; padding: 0; background: none; font: 14px "Open Sans", sans-serif; }
.search input::placeholder { color: #333; opacity: 1; }
.app { width: 49px; display: flex; align-items: center; justify-content: center; }
.open { border-bottom: 3px solid #76b9ed; padding-top: 3px; }
.open.active { background: #33454f; }
.tray { display: flex; align-items: center; gap: 8px; padding-right: 24px; }
.clock { text-align: center; font-size: 11px; line-height: 18px; width: 60px; margin-right: 3px; }
```
